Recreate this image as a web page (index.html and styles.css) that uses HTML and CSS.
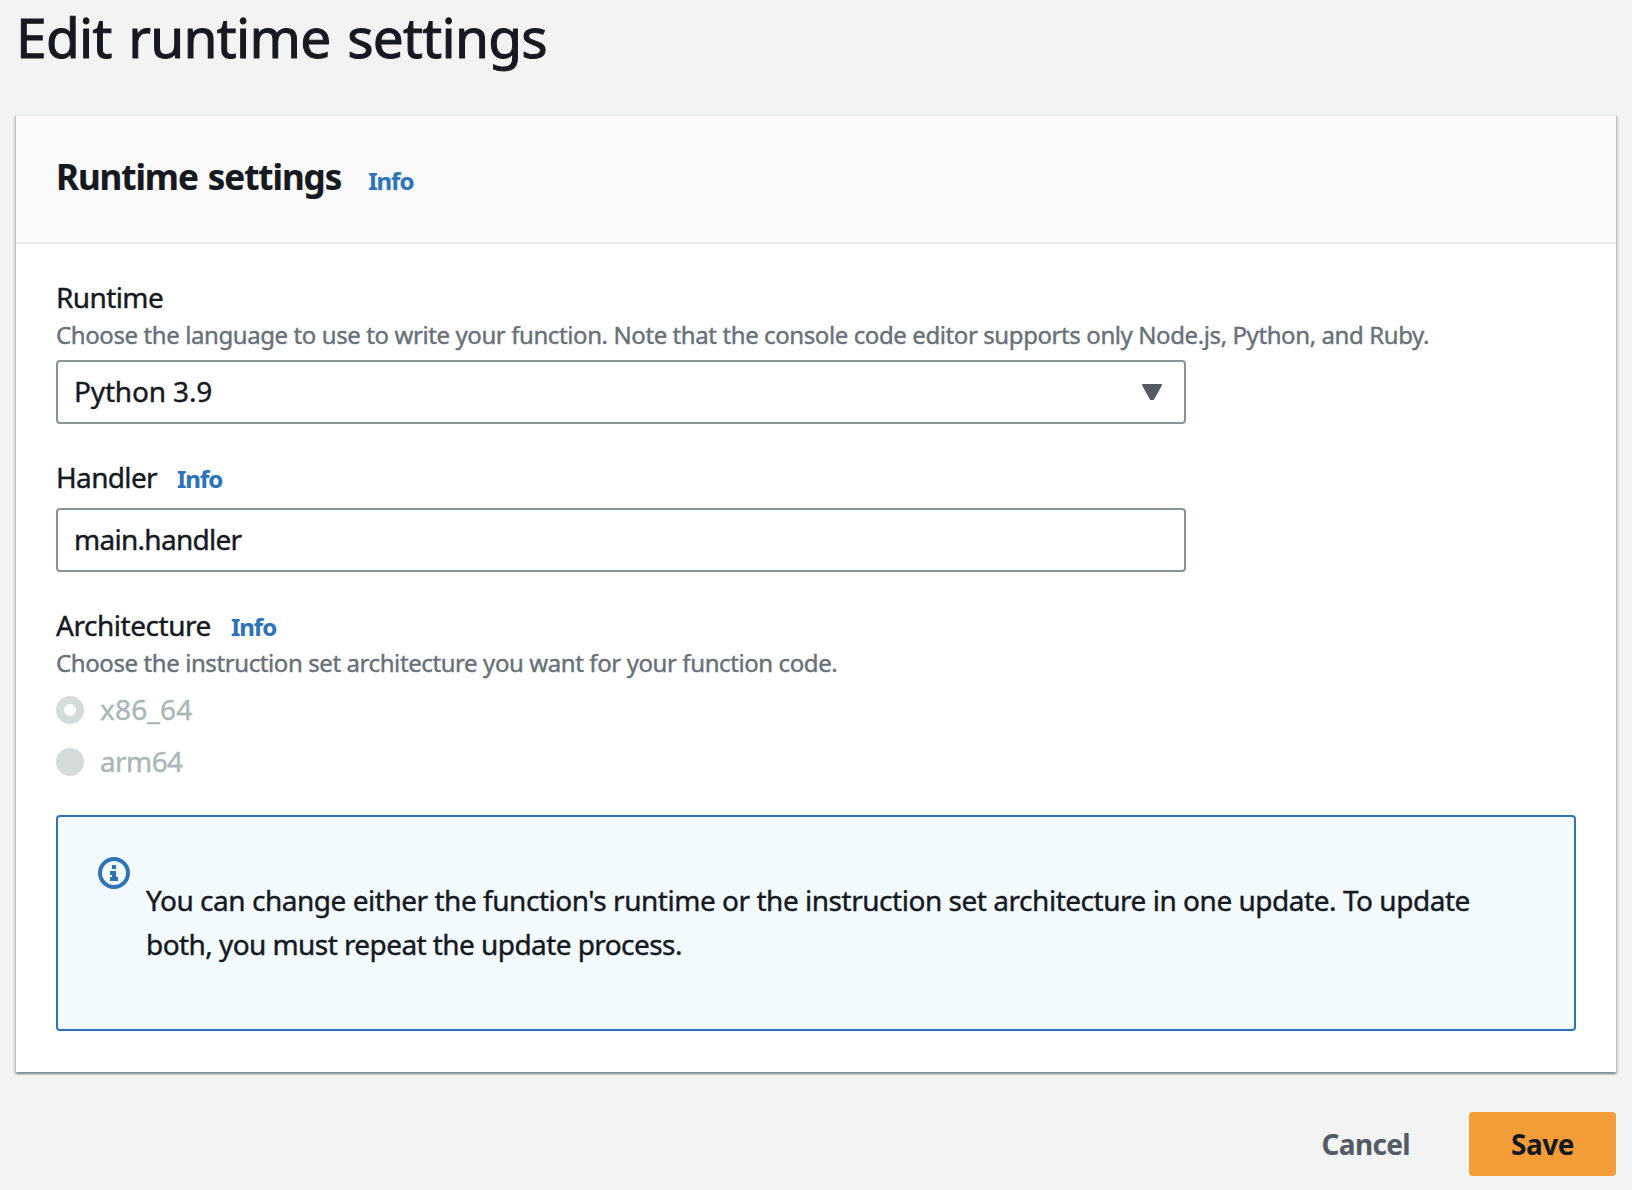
FILE: index.html
```html
<!DOCTYPE html>
<html lang="en">
<head>
<meta charset="utf-8">
<title>Edit runtime settings</title>
<link rel="stylesheet" href="styles.css">
</head>
<body>
<main class="page">
  <h1 class="page-title">Edit runtime settings</h1>
  <section class="card">
    <header class="card-header">
      <h2 class="card-title">Runtime settings</h2>
      <a class="info">Info</a>
    </header>
    <div class="card-body">
      <div class="field">
        <div class="label-row"><span class="label">Runtime</span></div>
        <p class="hint">Choose the language to use to write your function. Note that the console code editor supports only Node.js, Python, and Ruby.</p>
        <div class="control select">
          <span class="select-value">Python 3.9</span>
          <svg class="caret" width="20" height="16" viewBox="0 0 20 16"><path d="M1 1h18l-7.8 14h-2.4z" fill="#545b64" stroke="#545b64" stroke-width="2" stroke-linejoin="round"/></svg>
        </div>
      </div>
      <div class="field">
        <div class="label-row"><span class="label handler">Handler</span><a class="info">Info</a></div>
        <div class="control input"><span class="input-value">main.handler</span></div>
      </div>
      <div class="field">
        <div class="label-row"><span class="label architecture">Architecture</span><a class="info">Info</a></div>
        <p class="hint">Choose the instruction set architecture you want for your function code.</p>
        <div class="radios">
          <div class="radio"><span class="dot checked"></span><span class="radio-text">x86_64</span></div>
          <div class="radio"><span class="dot"></span><span class="radio-text arm">arm64</span></div>
        </div>
      </div>
      <div class="alert">
        <svg class="alert-icon" width="32" height="32" viewBox="0 0 32 32"><circle cx="16" cy="16" r="14" fill="none" stroke="#2e73b8" stroke-width="4"/><path d="M14 8h4v4h-4zM12 14h6v6h2v4h-8v-4h2v-2h-2z" fill="#2e73b8"/></svg>
        <p class="alert-text">You can change either the function's runtime or the instruction set architecture in one update. To update<br><span class="alert-second">both, you must repeat the update process.</span></p>
      </div>
    </div>
  </section>
  <footer class="actions">
    <a class="cancel">Cancel</a>
    <a class="save">Save</a>
  </footer>
</main>
</body>
</html>
```
FILE: styles.css
```css
* { box-sizing: border-box; }
body {
  margin: 0;
  background: #f2f4f3;
  color: #16191f;
  font-family: "Noto Sans", sans-serif;
  font-size: 28px;
  -webkit-text-stroke: .4px currentColor;
}
h1, h2, p { margin: 0; }
.page { height: 1190px; padding: 0 16px; }
.page-title {
  height: 114px;
  font-size: 55px;
  line-height: 74px;
  font-weight: 400;
  letter-spacing: -.7px;
  word-spacing: 3px;
  white-space: nowrap;
  -webkit-text-stroke-width: 1px;
}
.card {
  height: 958px;
  background: #fff;
  border-top: 2px solid #eaeded;
  box-shadow: 0 2px 2px 0 rgba(0, 28, 36, .3), 2px 2px 2px 0 rgba(0, 28, 36, .15), -2px 2px 2px 0 rgba(0, 28, 36, .15);
}
.card-header {
  display: flex;
  align-items: baseline;
  gap: 27px;
  height: 128px;
  padding: 34px 40px 0;
  background: #fafafa;
  border-bottom: 2px solid #eaeded;
}
.card-title { font-size: 35px; line-height: 54px; font-weight: 700; letter-spacing: -1.05px; word-spacing: 2px; }
.info { color: #2e73b8; font-size: 24px; font-weight: 700; line-height: 36px; letter-spacing: -1px; }
.card-title, .info { -webkit-text-stroke-width: .2px; }
.card-body { padding: 33px 40px 0; }
.field { margin-bottom: 33px; }
.label-row { display: flex; align-items: baseline; height: 40px; line-height: 40px; gap: 20px; }
.label { letter-spacing: -.6px; }
.handler { letter-spacing: -.66px; }
.architecture { letter-spacing: -.46px; }
.hint { height: 43px; font-size: 24px; line-height: 36px; letter-spacing: -.405px; color: #687078; white-space: nowrap; }
.control {
  display: flex;
  align-items: center;
  justify-content: space-between;
  width: 1130px;
  height: 64px;
  padding: 0 22px 2px 16px;
  border: 2px solid #879596;
  border-radius: 4px;
  line-height: 40px;
}
.select-value { letter-spacing: -.16px; }
.caret { margin-top: 2px; }
.input { margin-top: 11px; }
.input-value { letter-spacing: -.72px; }
.radios { display: flex; flex-direction: column; gap: 12px; margin-top: 2px; }
.radio { display: flex; align-items: center; gap: 16px; height: 40px; line-height: 38px; color: #aab7b8; }
.radio-text { padding-bottom: 2px; letter-spacing: .17px; }
.arm { letter-spacing: -.6px; }
.dot { width: 28px; height: 28px; border-radius: 50%; background: #d5dbdb; }
.checked { border: 8px solid #d5dbdb; background: #fff; }
.alert {
  display: flex;
  gap: 16px;
  height: 216px;
  padding: 40px;
  background: #f2fafd;
  border: 2px solid #2e73b8;
  border-radius: 4px;
}
.alert-icon { flex: none; }
.alert-text { padding-top: 21px; line-height: 44px; letter-spacing: -.47px; white-space: nowrap; }
.alert-second { letter-spacing: -.57px; }
.actions { display: flex; justify-content: flex-end; margin-top: 40px; gap: 59px; font-weight: 700; line-height: 64px; -webkit-text-stroke-width: 0; }
.cancel { color: #545b64; letter-spacing: -.65px; }
.save { width: 147px; height: 64px; text-align: center; letter-spacing: -.5px; background: #f29d38; border-radius: 4px; }
```
